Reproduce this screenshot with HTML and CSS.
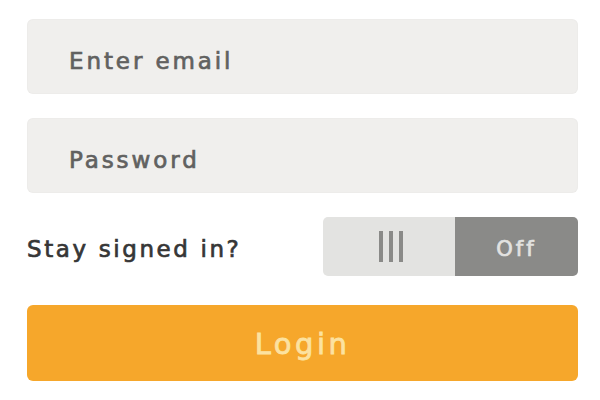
FILE: index.html
```html
<!DOCTYPE html>
<html>
<head>
<meta charset="utf-8">
<link rel="stylesheet" href="styles.css">
</head>
<body>
<form class="login">
  <div class="field"><span class="placeholder">Enter email</span></div>
  <div class="field"><span class="placeholder">Password</span></div>
  <div class="row">
    <span class="label">Stay signed in?</span>
    <div class="toggle">
      <div class="knob"><span class="bar"></span><span class="bar"></span><span class="bar"></span></div>
      <div class="state">Off</div>
    </div>
  </div>
  <div class="button">Login</div>
</form>
</body>
</html>
```
FILE: styles.css
```css
html, body {
  margin: 0;
  padding: 0;
  background: #ffffff;
}
body {
  font-family: "DejaVu Sans", "Open Sans", sans-serif;
}
.login {
  width: 551px;
  padding: 19px 0 0 27px;
  display: flex;
  flex-direction: column;
}
.field {
  height: 75px;
  box-sizing: border-box;
  background: #f0efed;
  border-radius: 6px;
  display: flex;
  align-items: center;
  padding: 8px 0 0 42px;
  margin-bottom: 24px;
  box-shadow: inset 0 0 2px rgba(0,0,0,0.05);
}
.placeholder {
  font-size: 23px;
  letter-spacing: 2.9px;
  color: #616160;
  -webkit-text-stroke: 0.7px #616160;
}
.row {
  height: 59px;
  display: flex;
  align-items: center;
  justify-content: space-between;
  margin-bottom: 29px;
}
.label {
  font-size: 23px;
  letter-spacing: 2.6px;
  color: #363636;
  -webkit-text-stroke: 0.7px #363636;
  padding-top: 5px;
}
.toggle {
  width: 255px;
  height: 59px;
  border-radius: 5px;
  overflow: hidden;
  display: flex;
}
.knob {
  width: 132px;
  background: #e3e3e1;
  display: flex;
  align-items: center;
  justify-content: center;
  gap: 6px;
  padding-left: 4px;
  box-sizing: border-box;
}
.bar {
  width: 4px;
  height: 31px;
  background: #8a8a88;
}
.state {
  flex: 1;
  background: #8a8a88;
  color: #e2e2e0;
  -webkit-text-stroke: 0.7px #e2e2e0;
  font-size: 21px;
  letter-spacing: 3px;
  display: flex;
  align-items: center;
  justify-content: center;
  padding-top: 4px;
}
.button {
  height: 76px;
  background: #f6a72b;
  border-radius: 6px;
  display: flex;
  align-items: center;
  justify-content: center;
  font-size: 29px;
  letter-spacing: 3.5px;
  color: #fce2a0;
  -webkit-text-stroke: 0.8px #fce2a0;
  padding-top: 2px;
  box-sizing: border-box;
}
```
